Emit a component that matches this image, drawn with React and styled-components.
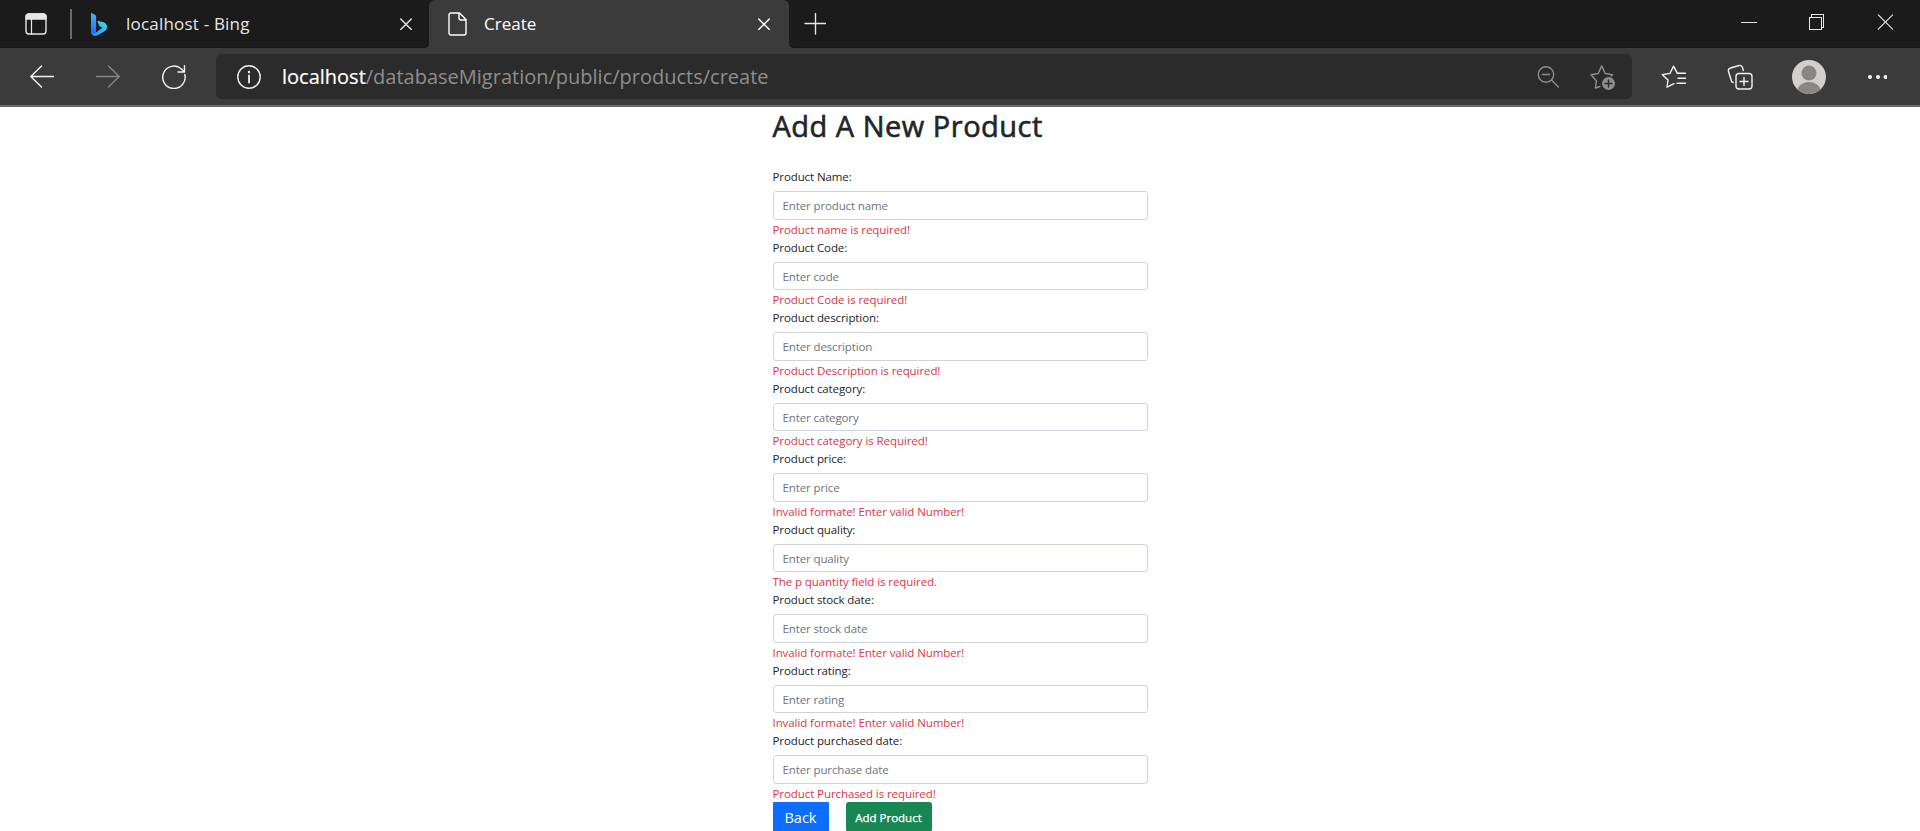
import React from 'react';
import styled, { createGlobalStyle } from 'styled-components';

const GlobalStyle = createGlobalStyle`
  * { box-sizing: border-box; }
  html, body, #root { height: 100%; }
  body {
    margin: 0;
    overflow: hidden;
    background: #fff;
    color: #212529;
    font-family: "Open Sans", "Noto Sans", sans-serif;
  }
`;

const Window = styled.div`
  height: 831px;
  display: flex;
  flex-direction: column;
  overflow: hidden;
`;

const TitleBar = styled.header`
  height: 48px;
  flex: none;
  display: flex;
  background: #3b3b3b;
  color: #e6e6e6;
`;

const TabStrip = styled.div`
  width: 429px;
  height: 48px;
  display: flex;
  align-items: center;
  padding: 0 17px 0 25px;
  background: #1b1b1b;
  border-bottom-right-radius: 5px;
  box-shadow: inset 0 -1px 0 #151515;
`;

const TabDivider = styled.span`
  width: 1.5px;
  height: 30px;
  margin: 0 19.5px 0 23px;
  background: #6a6a6a;
`;

const TabTitle = styled.span`
  flex: 1;
  margin-left: ${(p) => p.$gap}px;
  padding-bottom: 1px;
  font-size: 17px;
  line-height: 24px;
  letter-spacing: ${(p) => p.$spacing || 0}px;
  white-space: nowrap;
`;

const ActiveTabSlot = styled.div`
  width: 360px;
  height: 48px;
  background: linear-gradient(#1b1b1b 50%, #3b3b3b 50%);
`;

const ActiveTab = styled.div`
  height: 48px;
  display: flex;
  align-items: center;
  padding: 0 19px 0 19px;
  background: #3b3b3b;
  border-radius: 6px 6px 0 0;
  color: #fff;
`;

const CaptionArea = styled.div`
  flex: 1;
  height: 48px;
  display: flex;
  align-items: center;
  justify-content: space-between;
  padding: 0 27px 0 15px;
  background: #1b1b1b;
  border-bottom-left-radius: 5px;
  box-shadow: inset 0 -1px 0 #151515;
`;

const WindowControls = styled.div`
  display: flex;
  align-items: center;
  gap: 52px;
  height: 43px;
  align-self: flex-start;
`;

const Toolbar = styled.nav`
  height: 59px;
  flex: none;
  display: flex;
  align-items: center;
  padding: 0 30px;
  background: #3b3b3b;
  border-bottom: 2px solid #6b6b6b;
  color: #f2f2f2;
`;

const NavButtons = styled.div`
  width: 186px;
  display: flex;
  gap: 42px;
`;

const AddressBar = styled.div`
  width: 1416px;
  height: 45px;
  display: flex;
  align-items: center;
  padding: 0 16px 0 21px;
  background: #2b2b2b;
  border-radius: 6px;
`;

const Url = styled.span`
  flex: 1;
  margin-left: 21px;
  font-size: 20px;
  line-height: 28px;
  color: #8e8e8e;
  white-space: nowrap;
`;

const Host = styled.span`
  color: #fff;
  -webkit-text-stroke: 0.2px currentColor;
`;

const AddressActions = styled.div`
  display: flex;
  gap: 28px;
  color: #8e8e8e;
`;

const ToolbarActions = styled.div`
  flex: 1;
  display: flex;
  align-items: center;
  gap: 40px;
  padding-left: 29px;
`;

const Icon = styled.svg`
  display: block;
  flex: none;
  fill: none;
  stroke: currentColor;
  stroke-width: 1.4;
  stroke-linecap: round;
  stroke-linejoin: round;
`;

const Avatar = styled(Icon)`
  margin: 0 1px 0 -1px;
`;

const Page = styled.main`
  flex: 1;
  width: 375px;
  margin: 0 auto;
`;

const Heading = styled.h1`
  margin: 0;
  padding-top: 1px;
  height: 60.25px;
  font-size: 29px;
  font-weight: 500;
  line-height: 36px;
  letter-spacing: 0.5px;
  -webkit-text-stroke: 0.6px currentColor;
  white-space: nowrap;
`;

const Field = styled.div`
  height: 70.5px;
  font-size: 11.5px;
  line-height: 20px;
`;

const Label = styled.label`
  display: block;
  margin-bottom: 4px;
  letter-spacing: -0.1px;
`;

const Input = styled.input`
  display: block;
  width: 100%;
  height: 28.5px;
  padding: 0 9px;
  border: 1px solid #ced4da;
  border-radius: 3px;
  background: #fff;
  font: inherit;
  letter-spacing: -0.12px;
  outline: none;
  &::placeholder { color: #6c757d; opacity: 1; }
`;

const ErrorText = styled.div`
  height: 18px;
  color: #dc3545;
  letter-spacing: -0.08px;
`;

const Actions = styled.div`
  display: flex;
  gap: 17px;
`;

const Button = styled.button`
  width: ${(p) => p.$width}px;
  height: 30px;
  padding: 1px 0 0;
  border: 0;
  border-radius: ${(p) => p.$radius}px;
  background: ${(p) => p.$color};
  color: #fff;
  font-family: inherit;
  font-size: ${(p) => p.$size}px;
  line-height: 29px;
  -webkit-text-stroke: ${(p) => p.$stroke || 0}px currentColor;
  white-space: nowrap;
`;

const CloseIcon = () => (
  <Icon width="12" height="12" viewBox="0 0 12 12">
    <path d="M.7.9l10.6 10.6M11.3.9L.7 11.5" />
  </Icon>
);

const BingLogo = () => (
  <Icon width="16" height="23" viewBox="0 0 16 23">
    <defs>
      <linearGradient id="stem" x1="0" y1="0" x2="0" y2="1">
        <stop offset="0" stopColor="#37bdff" />
        <stop offset="1" stopColor="#2a62f4" />
      </linearGradient>
      <linearGradient id="bowl" x1="0" y1="1" x2="1" y2="0">
        <stop offset="0" stopColor="#2b7cf6" />
        <stop offset=".5" stopColor="#35b0fb" />
        <stop offset="1" stopColor="#35e3d0" />
      </linearGradient>
    </defs>
    <g stroke="none">
      <path fill="url(#stem)" d="M0 .8C0 .2.6-.1 1.1.2L4.300 2c.5.3.8.8.8 1.400v15.100c0 2.900-5.100 3.300-5.100.2z" />
      <path fill="url(#bowl)" d="M6.600 8.300c-.2.4 0 .9.2 1.300l1.600 3.600 2.900 1.500L5 19.500C3 20.700.8 20.300 0 18.500c0 2.600 2 4.500 4.100 4.500 1 0 1.900-.3 2.700-.8l6.300-3.700c1.700-1 2.900-2.600 2.900-4.600 0-2.200-1.400-3.900-3.300-4.600L7.500 7.900c-.4-.1-.7 0-.9.4z" />
    </g>
  </Icon>
);

const fields = [
  ['Product Name:', 'Enter product name', 'Product name is required!'],
  ['Product Code:', 'Enter code', 'Product Code is required!'],
  ['Product description:', 'Enter description', 'Product Description is required!'],
  ['Product category:', 'Enter category', 'Product category is Required!'],
  ['Product price:', 'Enter price', 'Invalid formate! Enter valid Number!'],
  ['Product quality:', 'Enter quality', 'The p quantity field is required.'],
  ['Product stock date:', 'Enter stock date', 'Invalid formate! Enter valid Number!'],
  ['Product rating:', 'Enter rating', 'Invalid formate! Enter valid Number!'],
  ['Product purchased date:', 'Enter purchase date', 'Product Purchased is required!'],
];

export default function App() {
  return (
    <Window>
      <GlobalStyle />
      <TitleBar>
        <TabStrip>
          <Icon width="22" height="22" viewBox="0 0 22 22">
            <rect x="1" y="1" width="20" height="20" rx="3" />
            <path d="M1 6V4a3 3 0 0 1 3-3h14a3 3 0 0 1 3 3v2z" fill="currentColor" />
            <path d="M6.5 6v15" strokeWidth="1.2" />
          </Icon>
          <TabDivider />
          <BingLogo />
          <TabTitle $gap={19} $spacing={0.2}>localhost - Bing</TabTitle>
          <CloseIcon />
        </TabStrip>
        <ActiveTabSlot>
          <ActiveTab>
            <Icon width="19" height="24" viewBox="0 0 19 24">
              <path d="M3 1h8.500L18 7.500V21a2 2 0 0 1-2 2H3a2 2 0 0 1-2-2V3a2 2 0 0 1 2-2zM11 1v5a2 2 0 0 0 2 2h5" />
            </Icon>
            <TabTitle $gap={17}>Create</TabTitle>
            <CloseIcon />
          </ActiveTab>
        </ActiveTabSlot>
        <CaptionArea>
          <Icon width="22" height="22" viewBox="0 0 22 22">
            <path d="M11.500 0v21M1 10.500h21" />
          </Icon>
          <WindowControls>
            <Icon width="16" height="16" viewBox="0 0 16 16" shapeRendering="crispEdges">
              <path d="M.5 8.500h15" strokeWidth="1" />
            </Icon>
            <Icon width="16" height="16" viewBox="0 0 16 16" shapeRendering="crispEdges">
              <path d="M.5 3.500h12v12h-12zM2.500 3V.5h12v12.500h-2" strokeWidth="1" />
            </Icon>
            <Icon width="16" height="16" viewBox="0 0 16 16">
              <path d="M1.300.8l14.400 14.400M15.700.8L1.300 15.200" strokeWidth="1.200" />
            </Icon>
          </WindowControls>
        </CaptionArea>
      </TitleBar>
      <Toolbar>
        <NavButtons>
          <Icon width="24" height="24" viewBox="0 0 24 24">
            <path d="M23.500 11.500H.8M11.500 1L.8 11.500 11.500 22" />
          </Icon>
          <Icon width="24" height="24" viewBox="0 0 24 24" color="#858585">
            <path d="M.5 11.500h22.700M12.500 1l10.700 10.500L12.500 22" />
          </Icon>
          <Icon width="24" height="24" viewBox="0 0 24 24">
            <path d="M22.800 9.500A11.200 11.200 0 1 1 19.500 4L22.500 7M22.500.8V7h-6.500" />
          </Icon>
        </NavButtons>
        <AddressBar>
          <Icon width="24" height="24" viewBox="0 0 24 24">
            <circle cx="12" cy="12" r="11.2" />
            <path d="M12 10.500V17.500" strokeWidth="1.8" />
            <circle cx="12" cy="7" r="1.2" fill="currentColor" stroke="none" />
          </Icon>
          <Url>
            <Host>localhost</Host>/databaseMigration/public/products/create
          </Url>
          <AddressActions>
            <Icon width="26" height="26" viewBox="0 0 26 26">
              <circle cx="11" cy="10.500" r="7.700" />
              <path d="M7.500 10.500h7M16.500 16l7 7" />
            </Icon>
            <Icon width="27" height="26" viewBox="0 0 27 26">
              <path d="M11 22.500l-4.600 1.500 1-7.200L2 10.800l7.200-1.300L12.700 1.900 16.200 9.500l7.300 1.200-1.200 1.300" />
              <circle cx="19.500" cy="19.500" r="6.500" fill="currentColor" stroke="none" />
              <path d="M19.500 16v7M16 19.500h7" stroke="#2b2b2b" />
            </Icon>
          </AddressActions>
        </AddressBar>
        <ToolbarActions>
          <Icon width="26" height="26" viewBox=".5 .8 26 26">
            <path d="M13.500 20.500L6.500 24l1-7.200L1.800 11.500 9.500 10.200 13 3l3.500 6.500M16.500 10h8.500M17.500 15h7.500M16.500 20h8.500" />
          </Icon>
          <Icon width="26" height="26" viewBox="0 0 26 26">
            <rect x="9" y="9.500" width="16" height="15.500" rx="3" />
            <path d="M17 13.500v8M13 17.500h8M6 18.500c-1-.3-1.500-1-1.700-2L1.500 7.500c-.5-1.700.3-3 2-3.500l8.500-2.500c2-.5 3 .3 3.500 2l.8 3" />
          </Icon>
          <Avatar width="34" height="34" viewBox="0 0 34 34">
            <defs>
              <clipPath id="avatar"><circle cx="17" cy="17" r="17" /></clipPath>
            </defs>
            <g stroke="none" clipPath="url(#avatar)">
              <rect width="34" height="34" fill="#d2d0ce" />
              <circle cx="17" cy="13" r="7.500" fill="#8a8683" />
              <ellipse cx="17" cy="32.500" rx="12" ry="10.500" fill="#8a8683" />
            </g>
          </Avatar>
          <Icon width="20" height="6" viewBox="-.5 0 20 6">
            <g fill="currentColor" stroke="none">
              <circle cx="2.500" cy="3" r="2" />
              <circle cx="10.500" cy="3" r="2" />
              <circle cx="18" cy="3" r="2" />
            </g>
          </Icon>
        </ToolbarActions>
      </Toolbar>
      <Page>
        <Heading>Add A New Product</Heading>
        {fields.map(([label, placeholder, error]) => (
          <Field key={label}>
            <Label>{label}</Label>
            <Input placeholder={placeholder} />
            <ErrorText>{error}</ErrorText>
          </Field>
        ))}
        <Actions>
          <Button $width={56} $radius={1} $color="#0d6efd" $size={14.5}>Back</Button>
          <Button $width={86} $radius={3} $color="#198754" $size={11.5} $stroke={0.25}>Add Product</Button>
        </Actions>
      </Page>
    </Window>
  );
}
